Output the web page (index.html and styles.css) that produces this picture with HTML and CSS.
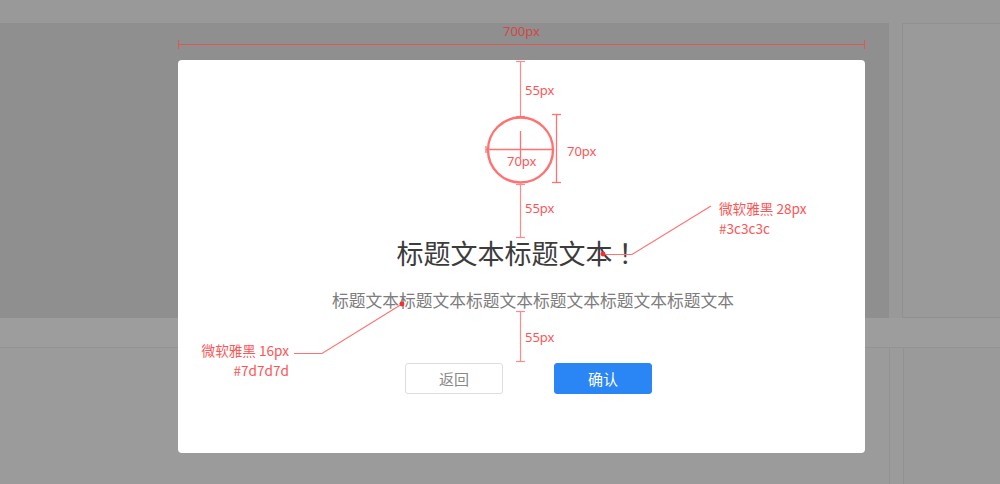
FILE: index.html
```html
<!DOCTYPE html>
<html lang="zh-CN">
<head>
<meta charset="utf-8">
<title>Dialog spec</title>
<link rel="stylesheet" href="styles.css">
</head>
<body>
<div class="page">
  <div class="top-strip"></div>
  <div class="row row-top">
    <div class="dark-panel"></div>
    <div class="card"></div>
  </div>
  <div class="band"></div>
  <div class="row row-bottom">
    <div class="card card-wide"></div>
    <div class="card"></div>
  </div>

  <div class="modal">
    <div class="icon"></div>
    <h1 class="title">标题文本标题文本<span class="bang">！</span></h1>
    <p class="subtitle">标题文本标题文本标题文本标题文本标题文本标题文本</p>
    <div class="actions">
      <button class="btn btn-back">返回</button>
      <button class="btn btn-ok">确认</button>
    </div>
  </div>

  <svg class="marks" width="1000" height="484" viewBox="0 0 1000 484">
    <g stroke="#e05555" stroke-width="1" fill="none">
      <line x1="178.5" y1="44.5" x2="864.5" y2="44.5"/>
      <line x1="178.5" y1="40" x2="178.5" y2="49"/>
      <line x1="864.5" y1="40" x2="864.5" y2="49"/>
    </g>
    <g stroke="#ff8a8a" stroke-width="1.2" fill="none">
      <line x1="520.5" y1="61" x2="520.5" y2="117"/>
      <line x1="516" y1="61.5" x2="525" y2="61.5"/>
      <line x1="516" y1="116.5" x2="525" y2="116.5"/>
      <line x1="520.5" y1="184" x2="520.5" y2="238"/>
      <line x1="516" y1="184.5" x2="525" y2="184.5"/>
      <line x1="516" y1="237.5" x2="525" y2="237.5"/>
      <line x1="520.5" y1="311" x2="520.5" y2="362"/>
      <line x1="516" y1="311.5" x2="525" y2="311.5"/>
      <line x1="516" y1="361.5" x2="525" y2="361.5"/>
    </g>
    <g stroke="#ff5a5a" stroke-width="1.3" fill="none" opacity="0.85">
      <circle cx="520.5" cy="150" r="32.5" stroke-width="2.4"/>
      <line x1="486" y1="149.5" x2="553" y2="149.5"/>
      <line x1="486" y1="146" x2="486" y2="153"/>
      <line x1="520.5" y1="131" x2="520.5" y2="158"/>
      <line x1="556.5" y1="114" x2="556.5" y2="183"/>
      <line x1="552" y1="114.5" x2="561" y2="114.5"/>
      <line x1="552" y1="182.5" x2="561" y2="182.5"/>
    </g>
    <g stroke="#ff7373" stroke-width="1.2" fill="none">
      <polyline points="603,254.5 632,254.5 711,206"/>
      <polyline points="402,304 322,353.5 294,353.5"/>
    </g>
    <g fill="#ff2a2a">
      <circle cx="603" cy="254" r="2.4"/>
      <circle cx="402" cy="304" r="2.4"/>
    </g>
  </svg>

  <span class="note note-width">700px</span>
  <span class="note note-55a">55px</span>
  <span class="note note-70in">70px</span>
  <span class="note note-70side">70px</span>
  <span class="note note-55b">55px</span>
  <span class="note note-55c">55px</span>
  <span class="note note-title">微软雅黑 28px<br>#3c3c3c</span>
  <span class="note note-sub">微软雅黑 16px<br>#7d7d7d</span>
</div>
</body>
</html>
```

FILE: styles.css
```css
* {
  box-sizing: border-box;
}

html, body {
  margin: 0;
  padding: 0;
}

body {
  width: 1000px;
  height: 484px;
  overflow: hidden;
  background: #9b9b9b;
  font-family: "Noto Sans CJK SC", "Noto Sans", sans-serif;
}

.page {
  position: relative;
  width: 1000px;
  height: 484px;
  display: flex;
  flex-direction: column;
  background: #9b9b9b;
}

.top-strip {
  height: 23px;
  flex: 0 0 23px;
  background: #999999;
}

.row {
  display: flex;
  gap: 13px;
}

.row-top {
  flex: 0 0 295px;
  background: #999999;
}

.dark-panel {
  flex: 0 0 889px;
  background: #8f8f8f;
}

.card {
  flex: 1;
  border: 1px solid #919191;
  background: #9a9a9a;
  border-right: none;
}

.band {
  flex: 0 0 30px;
  background: #9d9d9d;
  border-bottom: 1px solid #939393;
}

.row-bottom {
  flex: 1;
  background: #9b9b9b;
}

.row-bottom .card {
  border-top: none;
  border-bottom: none;
}

.card-wide {
  flex: 0 0 890px;
  border-left: none;
  border-right: 1px solid #939393;
  background: #9b9b9b;
}

.modal {
  position: absolute;
  left: 178px;
  top: 60px;
  width: 687px;
  height: 393px;
  background: #ffffff;
  border-radius: 4px;
  display: flex;
  flex-direction: column;
  align-items: center;
  padding-top: 57px;
}

.icon {
  width: 66px;
  height: 66px;
  flex: 0 0 66px;
  margin-left: -2px;
}

.title {
  margin: 55px 0 0 -1px;
  font-size: 27px;
  line-height: 30px;
  font-weight: 400;
  color: #3c3c3c;
  letter-spacing: 0;
}

.bang {
  margin-left: 6px;
}

.subtitle {
  margin: 20px 0 0 23px;
  font-size: 16.75px;
  line-height: 24px;
  color: #7d7d7d;
}

.actions {
  margin-top: 51px;
  display: flex;
  gap: 51px;
  padding-left: 14px;
}

.btn {
  width: 98px;
  height: 31px;
  border-radius: 3px;
  font-family: "Noto Sans CJK SC", "Noto Sans", sans-serif;
  font-size: 15px;
  line-height: 29px;
  padding: 0;
  cursor: pointer;
}

.btn-back {
  background: #ffffff;
  border: 1px solid #dddddd;
  color: #8a8a8a;
}

.btn-ok {
  background: #2a86f5;
  border: 1px solid #2a86f5;
  color: #ffffff;
}

.marks {
  position: absolute;
  left: 0;
  top: 0;
  pointer-events: none;
}

.note {
  position: absolute;
  font-family: "Noto Sans", "Noto Sans CJK SC", sans-serif;
  font-size: 13px;
  line-height: 18px;
  color: #ff5454;
  white-space: nowrap;
}

.note-width {
  left: 503px;
  top: 22px;
  color: #d04848;
}

.note-55a {
  left: 525px;
  top: 81px;
}

.note-70in {
  left: 507px;
  top: 152px;
}

.note-70side {
  left: 567px;
  top: 142px;
}

.note-55b {
  left: 525px;
  top: 199px;
}

.note-55c {
  left: 525px;
  top: 328px;
}

.note-title {
  left: 719px;
  top: 198px;
  font-size: 13.6px;
  line-height: 20px;
  font-family: "Noto Sans CJK SC", "Noto Sans", sans-serif;
}

.note-sub {
  right: 711px;
  top: 340px;
  font-size: 13.6px;
  line-height: 20px;
  text-align: right;
  font-family: "Noto Sans CJK SC", "Noto Sans", sans-serif;
}
```
